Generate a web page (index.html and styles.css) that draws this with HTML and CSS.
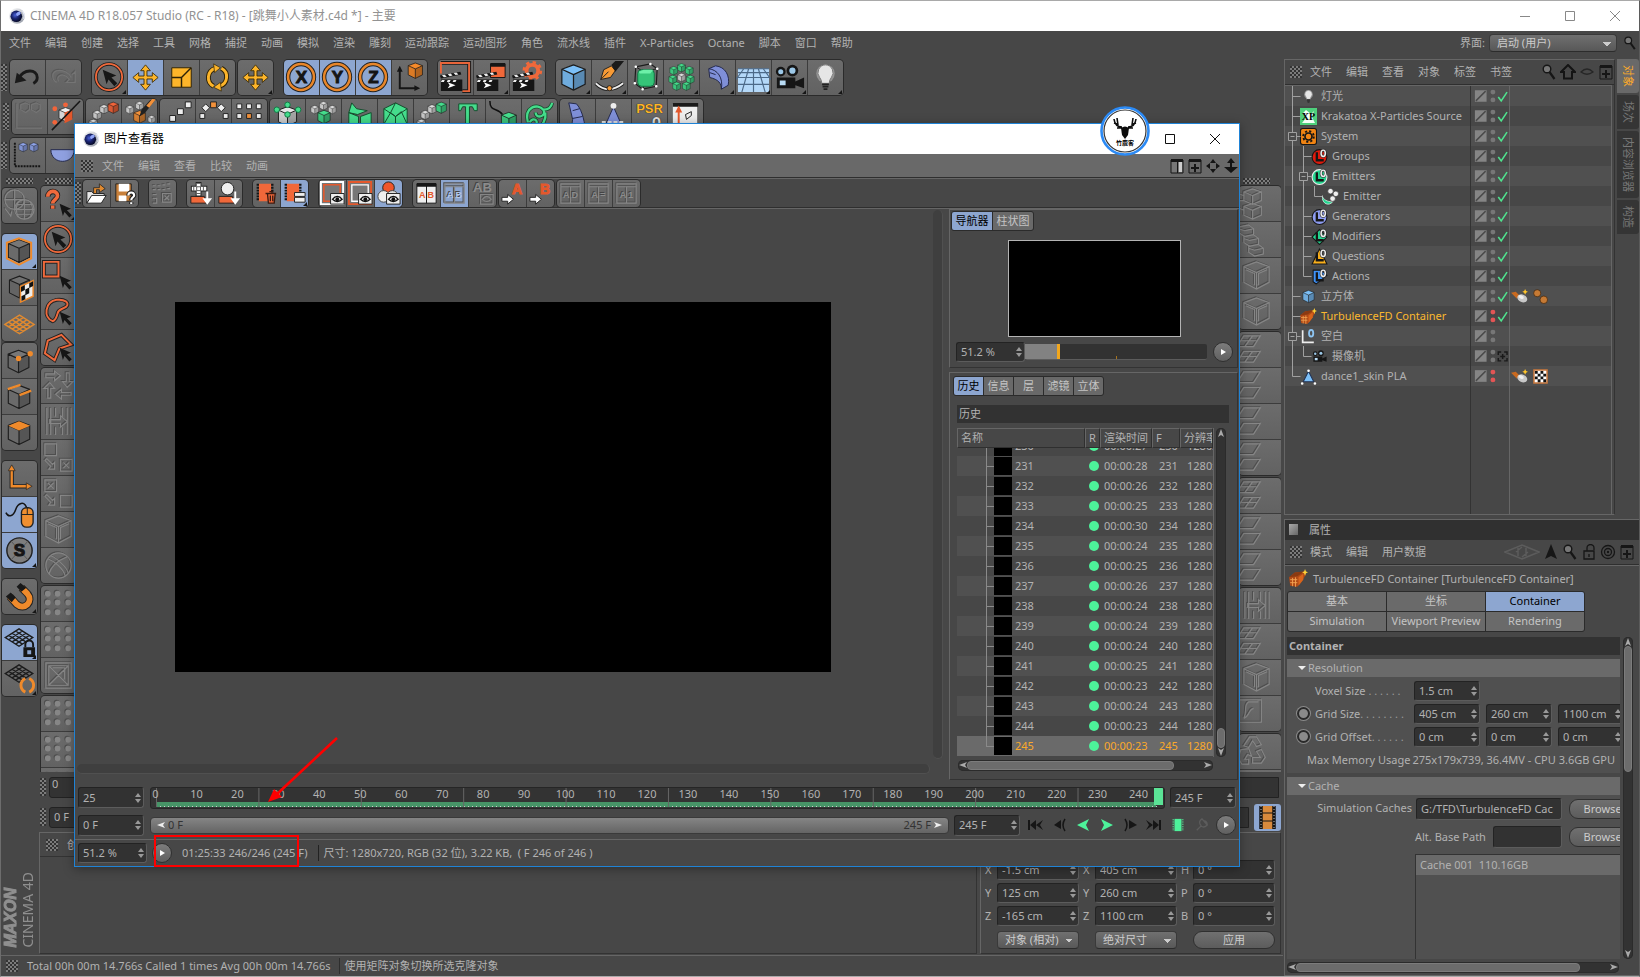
FILE: index.html
```html
<!DOCTYPE html>
<html lang="zh-CN">
<head>
<meta charset="utf-8">
<title>CINEMA 4D R18.057 Studio</title>
<link rel="stylesheet" href="styles.css">
</head>
<body>
<svg class="defs" aria-hidden="true">
<defs>
<radialGradient id="orb" cx="40%" cy="40%" r="60%"><stop offset="0" stop-color="#4a62d8"/><stop offset=".5" stop-color="#1a2470"/><stop offset="1" stop-color="#060a28"/></radialGradient>
<linearGradient id="glass" x1="0" y1="0" x2="1" y2="1"><stop offset="0" stop-color="#fff"/><stop offset="1" stop-color="#8d93a0"/></linearGradient>
</defs>
<symbol id="c4d" viewBox="0 0 16 16"><circle cx="8" cy="8" r="7.800" fill="url(#glass)"/><circle cx="7.300" cy="8.300" r="5.800" fill="url(#orb)"/><path d="M11.500 2.500A6 6 0 0 1 13 12 5 5 0 0 0 11.500 2.500z" fill="#e8ecfa"/><ellipse cx="9.500" cy="6" rx="2.600" ry="1.700" fill="#8fa4f6" transform="rotate(-35 9 6)"/></symbol>
<symbol id="cube" viewBox="0 0 36 36"><path d="M18 5L30 9.500V25L18 31 6 25V9.500z" fill="currentColor"/><path d="M18 15L30 9.500V25L18 31z" fill="#000" opacity=".28"/><path d="M18 15L6 9.500V25L18 31z" fill="#000" opacity=".1"/><path d="M18 5L30 9.500V25L18 31 6 25V9.500zM6 9.500L18 15 30 9.500M18 15V31" fill="none" stroke="#1d1d1d" stroke-width="1.300" stroke-linejoin="round"/></symbol>
<symbol id="undo" viewBox="0 0 36 36"><path d="M9 19C14 9 28 9 28 18c0 3-2 5-4 6" fill="none" stroke="#1a1a1a" stroke-width="3"/><path d="M5 24L7 13l10 8z" fill="#1a1a1a"/></symbol>
<symbol id="redo" viewBox="0 0 36 36"><path d="M26 18C20 8 6 9 7 17c0 3 2 5 4 6M13 22c-3-5 3-9 8-5l3 3-3 3h9V12l-3 3"/></symbol>
<symbol id="ptr" viewBox="0 0 36 36"><path d="M11 10l14 6-5 2 6 6-3 3-6-7-2 5z" fill="#161616"/></symbol>
<symbol id="select" viewBox="0 0 36 36"><circle cx="17.500" cy="17.500" r="13.500" fill="none" stroke="#1d1d1d" stroke-width="3.600"/><circle cx="17.500" cy="17.500" r="13.500" fill="none" stroke="#f06a3c" stroke-width="1.800"/><use href="#ptr" width="36" height="36"/></symbol>
<symbol id="move" viewBox="0 0 36 36"><path d="M18 5l5 6h-3.500v5.500H25V13l6 5-6 5v-3.500h-5.500V25H23l-5 6-5-6h3.500v-5.500H11V23l-6-5 6-5v3.500h5.500V11H13z" fill="#fdb52a" stroke="#3a2a08" stroke-width=".9"/></symbol>
<symbol id="scale" viewBox="0 0 36 36"><path d="M8 8h20v20H8z" fill="#fdb52a" stroke="#2c2208"/><path d="M8 18h10v10M18 18L28 8" fill="none" stroke="#2c2208" stroke-width="1.500"/></symbol>
<symbol id="rotate" viewBox="0 0 36 36"><path d="M14 27A10 10 0 0 1 16 8.500M22 8.500A10 10 0 0 1 20 27" fill="none" stroke="#2c2208" stroke-width="5"/><path d="M14 27A10 10 0 0 1 16 8.500M22 8.500A10 10 0 0 1 20 27" fill="none" stroke="#fdb52a" stroke-width="3"/><path d="M14 4l7 4-6 5zM22 32l-8-4 7-5z" fill="#fdb52a" stroke="#2c2208" stroke-width=".7"/></symbol>
<symbol id="ring" viewBox="0 0 36 36"><circle cx="17.500" cy="17.500" r="13.300" fill="none" stroke="#222" stroke-width="4.600"/><circle cx="17.500" cy="17.500" r="13.300" fill="none" stroke="#e8862a" stroke-width="2.600"/></symbol>
<symbol id="coord" viewBox="0 0 36 36"><path d="M8 9v20h17" fill="none" stroke="#161616" stroke-width="2"/><path d="M8 6l3 6H5zM29 29l-6-3v6z" fill="#161616"/><use href="#cube" x="13" y="0" width="22" height="22" color="#f58a2a"/></symbol>
<symbol id="clap" viewBox="0 0 36 36"><path d="M3 20h22v12H3z" fill="#151515"/><path d="M2 16l21-4 1 3-21 4z" fill="#151515"/><path d="M4 15.800l3-.6 2 2-3 .6zM10 14.600l3-.6 2 2-3 .6zM16 13.400l3-.6 2 2-3 .6zM4 20.500h3l-1 2H3zM10 20.500h3l-1 2H9zM16 20.500h3l-1 2h-3z" fill="#eee"/><path d="M10 23l8 3-8 3 2-3z" fill="#fff"/></symbol>
<symbol id="clap1" viewBox="0 0 36 36"><path d="M3 3h29v29h-7" fill="none" stroke="#1b1b1b" stroke-width="4"/><path d="M3 14V3h29v29h-7" fill="none" stroke="#e8653a" stroke-width="2"/><use href="#clap" width="36" height="36"/></symbol>
<symbol id="clap2" viewBox="0 0 36 36"><path d="M17 4h15v14H17z" fill="#f0683a" stroke="#161616"/><path d="M17 3h15v4H17z" fill="#161616"/><use href="#clap" width="36" height="36"/></symbol>
<symbol id="clap3" viewBox="0 0 36 36"><circle cx="23" cy="11" r="6" fill="none" stroke="#f0683a" stroke-width="4"/><circle cx="23" cy="11" r="8.600" fill="none" stroke="#f0683a" stroke-width="3" stroke-dasharray="3.400 3.350"/><use href="#clap" width="36" height="36"/></symbol>
<symbol id="pen" viewBox="0 0 36 36"><path d="M4 24c8 8 18 8 28 0" fill="none" stroke="#222" stroke-width="4"/><path d="M4 24c8 8 18 8 28 0" fill="none" stroke="#eee" stroke-width="2"/><path d="M9 20l3-10 8-4 4 5-5 7z" fill="#f79a35" stroke="#222"/><path d="M9 20l8-8" stroke="#222"/><path d="M20 5l4-4h9l-9 11z" fill="#1a1a1a"/><circle cx="18" cy="29" r="2.600" fill="#f79a35" stroke="#222"/></symbol>
<symbol id="sds" viewBox="0 0 36 36"><path d="M8 7l15-3 7 5-1 18-14 3-8-6z" fill="none" stroke="#1c1c1c" stroke-width="1.200"/><path d="M8 7l8 5v18M16 12l14-3" fill="none" stroke="#1c1c1c"/><rect x="10" y="10" width="17" height="17" rx="4" fill="#35c478" stroke="#174"/><path d="M11 12l5-2h10l-3 4H12z" fill="#6cf0a8"/><path d="M8 7h.1M23 4h.1M30 9h.1M29 27h.1M15 30h.1M7 24h.1" stroke="#fff" stroke-width="2.600" stroke-linecap="round"/></symbol>
<symbol id="array" viewBox="0 0 36 36"><g color="#45dd8c"><use href="#cube" x="12" y="2" width="12" height="12"/><use href="#cube" x="4" y="5" width="12" height="12"/><use href="#cube" x="20" y="5" width="12" height="12"/><use href="#cube" x="3" y="14" width="12" height="12"/><use href="#cube" x="21" y="14" width="12" height="12"/><use href="#cube" x="7" y="21" width="12" height="12"/><use href="#cube" x="17" y="21" width="12" height="12"/></g><use href="#cube" x="12" y="12" width="12" height="12" color="#ddd"/></symbol>
<symbol id="bend" viewBox="0 0 36 36"><path d="M9 9l7-3c10 1 15 10 13 20l-7 4c0-6-3-10-12-12z" fill="#7f8fd8" stroke="#23284a"/><path d="M9 9c9 1 15 9 13 21M10 13l6 2" fill="none" stroke="#23284a"/></symbol>
<symbol id="floor" viewBox="0 0 36 36"><path d="M2 9h32v24H2z" fill="#b4d8f8"/><path d="M2 9h32M2 13h32M2 18h32M2 25h32M18 9v24M13 9L6 33M23 9l7 24M8 9L0 20M28 9l8 11" stroke="#4d6a88" stroke-width="1.200"/></symbol>
<symbol id="cam" viewBox="0 0 36 36"><circle cx="9" cy="12" r="5" fill="#161616"/><circle cx="21" cy="11" r="6" fill="#161616"/><circle cx="9" cy="12" r="2.600" fill="#9cc8e8"/><circle cx="21" cy="11" r="3.200" fill="#9cc8e8"/><path d="M5 18h19v11H5zM24 22l9-4v11l-9-3z" fill="#161616"/><path d="M8 21h6v5H8z" fill="#b9dcf5"/></symbol>
<symbol id="bulb" viewBox="0 0 36 36"><circle cx="18" cy="14" r="9.500" fill="#fff" opacity=".3"/><path d="M18 5a8 8 0 0 1 6 13c-2 3-2 4-2 6h-8c0-2 0-3-2-6a8 8 0 0 1 6-13z" fill="#e6e6e6" stroke="#777"/><path d="M14.500 25h7M15 27.500h6M16 30h4" stroke="#222" stroke-width="1.800"/></symbol>
<symbol id="chain" viewBox="0 0 36 36"><g color="#ddd"><use href="#cube" x="1" y="19" width="13" height="13"/><use href="#cube" x="5" y="10" width="13" height="13"/><use href="#cube" x="12" y="4" width="13" height="13"/></g><use href="#cube" x="20" y="1" width="16" height="16"/></symbol>
<symbol id="mgx" viewBox="0 0 36 36"><use href="#cube" x="8" y="5" width="20" height="22" color="#eee"/><path d="M17 14l8-3v10l-8 4z" fill="#e4582c"/><g fill="#f2643a"><circle cx="7" cy="10" r="2.500"/><circle cx="18" cy="6" r="2.500"/><circle cx="7" cy="24" r="2.500"/></g><path d="M33 2L4 32" stroke="#161616" stroke-width="1.600"/></symbol>
<symbol id="brush" viewBox="0 0 36 36"><g color="#ddd"><use href="#cube" x="2" y="5" width="12" height="12"/><use href="#cube" x="12" y="1" width="12" height="12"/><use href="#cube" x="25" y="15" width="11" height="12"/></g><use href="#cube" x="9" y="9" width="18" height="19" color="#f2913a"/><path d="M35 0L24 14l-6 4 2-7 9-10z" fill="#222"/><path d="M35 0l-7 9-3-2 6-7z" fill="#f2913a"/></symbol>
<symbol id="lin" viewBox="0 0 36 36"><g fill="#eee" stroke="#222"><path d="M26 3h6v6h-6zM18 10h6v6h-6zM10 17h6v6h-6z"/></g></symbol>
<symbol id="rad" viewBox="0 0 36 36"><g fill="#eee" stroke="#222"><path d="M10 5l4 4-4 4-4-4zM26 5l4 4-4 4-4-4zM4 15h5v5H4zM28 15h5v5h-5z"/><path d="M15 3h6v6h-6z" fill="#f2913a"/></g></symbol>
<symbol id="grd" viewBox="0 0 36 36"><g fill="#eee" stroke="#222"><path d="M5 5h5v5H5zM15 5h5v5h-5zM25 5h5v5h-5zM5 15h5v5H5zM25 15h5v5h-5z"/><path d="M15 15h5v5h-5z" fill="#f2913a"/></g></symbol>
<symbol id="clonew" viewBox="0 0 36 36"><use href="#cube" x="4" y="4" width="28" height="28" color="#e4e4e4"/><g fill="#45dd8c" stroke="#174"><circle cx="7" cy="11" r="2.800"/><circle cx="18" cy="6" r="2.800"/><circle cx="29" cy="11" r="2.800"/><circle cx="18" cy="16" r="2.800"/></g></symbol>
<symbol id="cloner" viewBox="0 0 36 36"><g color="#ddd"><use href="#cube" x="3" y="5" width="12" height="12"/><use href="#cube" x="12" y="1" width="12" height="12"/><use href="#cube" x="21" y="5" width="12" height="12"/></g><use href="#cube" x="9" y="9" width="19" height="19" color="#45dd8c"/></symbol>
<symbol id="frac" viewBox="0 0 36 36"><path d="M7 14l10 4v16L7 30zM19 18l11-4v16l-11 4zM10 4l5 6 11 2-10 4-9-2z" fill="#45dd8c" stroke="#164a2c"/></symbol>
<symbol id="hex" viewBox="0 0 36 36"><path d="M18 4l12 6v16l-12 8-12-8V10z" fill="#45dd8c" stroke="#164a2c"/><path d="M6 10l12 8 12-8M18 18v16M18 4l-5 10 5 4 6-5M6 26l7-12M30 26l-6-13" stroke="#164a2c" fill="none"/></symbol>
<symbol id="tt" viewBox="0 0 36 36"><path d="M9 5h19v7h-3l-2-4h-3v24h-4V8h-3l-2 4H9z" fill="#45dd8c" stroke="#164a2c"/></symbol>
<symbol id="trace" viewBox="0 0 36 36"><path d="M4 2c0 12 8 6 13 14" fill="none" stroke="#111" stroke-width="1.600"/><use href="#cube" x="12" y="10" width="23" height="24" color="#45dd8c"/></symbol>
<symbol id="vine" viewBox="0 0 36 36"><path d="M6 24C2 8 16 4 22 11c4 7-8 10-8 3M22 11c4 0 8-2 9-7M24 14c1 6-2 14-10 18M8 24c3-6 10-2 6 3" fill="none" stroke="#164a2c" stroke-width="4"/><path d="M6 24C2 8 16 4 22 11c4 7-8 10-8 3M22 11c4 0 8-2 9-7M24 14c1 6-2 14-10 18M8 24c3-6 10-2 6 3" fill="none" stroke="#45dd8c" stroke-width="2.400"/></symbol>
<symbol id="horn" viewBox="0 0 36 36"><path d="M9 4l8 1c7 8 8 20 10 30H11l2-14z" fill="#7f8fd8" stroke="#23284a"/><path d="M13 12l7-2M13 20l10-2" stroke="#23284a"/></symbol>
<symbol id="figure" viewBox="0 0 36 36"><path d="M18 8l8 18H10z" fill="#7f8fd8" stroke="#23284a"/><circle cx="18" cy="7" r="3" fill="#eee"/><path d="M6 24h24" stroke="#ddd" stroke-width="3" stroke-dasharray="4 2"/></symbol>
<symbol id="sheet" viewBox="0 0 36 36"><path d="M5 5h25v30H5z" fill="#eee"/><path d="M5 4h26v4H5z" fill="#1a1a1a"/><path d="M11 10v24M9 13l2-4 2 4z" stroke="#e4582c" stroke-width="2"/><path d="M18 16l6-3v4l-5 4z" fill="none" stroke="#222"/></symbol>
<symbol id="plot" viewBox="0 0 36 36"><path d="M5 5v24h26" fill="none" stroke="#151515" stroke-width="2" stroke-dasharray="2 1"/><g color="#8fa4ea"><use href="#cube" x="7" y="3" width="13" height="13"/><use href="#cube" x="18" y="3" width="13" height="13"/></g></symbol>
<symbol id="g-plot" viewBox="0 0 36 36"><path d="M5 5v25h26M9 6l5-2 4 2v5l-4 3-5-3zM20 6l5-2 4 2v5l-4 3-5-3z"/></symbol>
<symbol id="cup" viewBox="0 0 36 36"><path d="M5 12h24c0 8-6 12-12 12S5 20 5 12z" fill="#8fa0e0" stroke="#23284a"/></symbol>
<!-- mode palette -->
<symbol id="m-model" viewBox="0 0 36 36"><use href="#cube" x="1" y="1" width="33" height="33" color="#777"/><path d="M17.500 4.500L30 9v16l-12.500 6.500L5 25V9z" fill="none" stroke="#ef8a2b" stroke-width="2"/></symbol>
<symbol id="m-tex" viewBox="0 0 36 36"><use href="#cube" x="2" y="2" width="32" height="31" color="#707070"/><path d="M19 17l13-6v16l-13 6z" fill="#eee" stroke="#ef8a2b" stroke-width="1.500"/><path d="M19.500 17.500l4-2v5l-4 2zM28 13.500l4-2v5l-4 2zM24 20l4-2v6l-4 2zM20 27l4-2v5l-4 2z" fill="#111"/></symbol>
<symbol id="m-grid" viewBox="0 0 36 36"><path d="M3 19L18 9.500 33 19 18 28.500zM6.750 16.625l15 9.500M10.500 14.250l15 9.500M14.250 11.875l15 9.500M29.250 16.625l-15 9.500M25.500 14.250l-15 9.500M21.750 11.875l-15 9.500" fill="none" stroke="currentColor" stroke-width="1.500"/></symbol>
<symbol id="m-pts" viewBox="0 0 36 36"><use href="#cube" x="1" y="3" width="32" height="32" color="#777"/><circle cx="17" cy="16" r="2.800" fill="#ef8a2b"/><circle cx="29" cy="11" r="2.800" fill="#ef8a2b"/></symbol>
<symbol id="m-edge" viewBox="0 0 36 36"><use href="#cube" x="1" y="2" width="33" height="33" color="#777"/><path d="M6 10.500l13-4.500M18 16.500l12-4.500" stroke="#ef8a2b" stroke-width="2.400"/></symbol>
<symbol id="m-poly" viewBox="0 0 36 36"><use href="#cube" x="1" y="2" width="33" height="33" color="#777"/><path d="M17.500 6.500L29 11l-11.500 5L6.500 11z" fill="#ef8a2b"/></symbol>
<symbol id="m-axis" viewBox="0 0 36 36"><path d="M10 9v17h17" fill="none" stroke="#222" stroke-width="4.400"/><path d="M10 9v17h17" fill="none" stroke="#ef8a2b" stroke-width="2.400"/><path d="M10 4l3.500 6h-7zM31 26l-6-3.500v7z" fill="#ef8a2b" stroke="#222" stroke-width=".7"/></symbol>
<symbol id="m-mouse" viewBox="0 0 36 36"><path d="M4 16c3 6 8 3 10-3s9-11 12 0" fill="none" stroke="#161616" stroke-width="1.600"/><rect x="20" y="11" width="12" height="20" rx="5" fill="#f08f30" stroke="#222" stroke-width="1.400"/><path d="M20 18h12M26 11v7" stroke="#222"/></symbol>
<symbol id="m-s" viewBox="0 0 36 36"><circle cx="18" cy="18" r="13" fill="#7d7d7d" stroke="#222" stroke-width="1.500"/><path d="M9 8l18 20M27 8L9 28" stroke="#555"/></symbol>
<symbol id="m-mag" viewBox="0 0 36 36"><path d="M8 18l7 8c8 7 18-3 11-11l-6-6" fill="none" stroke="#222" stroke-width="8"/><path d="M8 18l7 8c8 7 18-3 11-11l-6-6" fill="none" stroke="#ef8a2b" stroke-width="6"/><path d="M4 18l5-4 5 5-4 5zM15 8l4-4 6 5-5 4z" fill="#181818"/></symbol>
<symbol id="m-lock" viewBox="0 0 36 36"><use href="#m-grid" x="0" y="-5" width="35" height="34" color="#1c1c1c"/><path d="M24 23v-3a4 4 0 0 1 8 0v3" fill="none" stroke="#161616" stroke-width="2"/><path d="M22 23h12v10H22z" fill="#161616"/><path d="M26 26h4v4h-4z" fill="#8da6d0"/></symbol>
<symbol id="m-loop" viewBox="0 0 36 36"><use href="#m-grid" x="0" y="-5" width="35" height="34" color="#1c1c1c"/><path d="M24 18c-6 3-6 11 0 14M28 18c6 3 6 11 0 14" fill="none" stroke="#ef8a2b" stroke-width="3"/></symbol>
<symbol id="s-q" viewBox="0 0 36 36"><path d="M7 11c0-7 10-7 10-1 0 4-5 4-5 8M12 20v3.500" fill="none" stroke="#222" stroke-width="5.500"/><path d="M7 11c0-7 10-7 10-1 0 4-5 4-5 8M12 20v3.500" fill="none" stroke="#f06a3c" stroke-width="3.800"/><use href="#ptr" x="10" y="10" width="30" height="30"/></symbol>
<symbol id="s-rect" viewBox="0 0 36 36"><path d="M3 4h15v15H3z" fill="none" stroke="#222" stroke-width="4"/><path d="M3 4h15v15H3z" fill="none" stroke="#f06a3c" stroke-width="2"/><use href="#ptr" x="10" y="10" width="30" height="30"/></symbol>
<symbol id="s-free" viewBox="0 0 36 36"><path d="M12 28C2 24 4 8 16 6c8-1 14 3 10 7-4 3-8 2-9 7-1 4-2 7-5 8z" fill="none" stroke="#222" stroke-width="4"/><path d="M12 28C2 24 4 8 16 6c8-1 14 3 10 7-4 3-8 2-9 7-1 4-2 7-5 8z" fill="none" stroke="#f06a3c" stroke-width="2"/><use href="#ptr" x="10" y="10" width="30" height="30"/></symbol>
<symbol id="s-poly" viewBox="0 0 36 36"><path d="M7 11l14-6 10 10-12 4-5 12L4 24z" fill="none" stroke="#222" stroke-width="4"/><path d="M7 11l14-6 10 10-12 4-5 12L4 24z" fill="none" stroke="#f06a3c" stroke-width="2"/><use href="#ptr" x="10" y="10" width="30" height="30"/></symbol>
<!-- embossed, unavailable tools -->
<symbol id="g-globe" viewBox="0 0 36 36"><circle cx="13" cy="12" r="10"/><circle cx="23" cy="22" r="10"/><path d="M13 2v20M3 12h20M23 12v20M13 22h20M17 14c-3 5-3 11 0 16M29 14c3 5 3 11 0 16M15 17h16M15 27h16M3 21l6 8 1-5"/></symbol>
<symbol id="g-swap" viewBox="0 0 36 36"><path d="M5 6h9V3l6 5-6 5v-3H5zM29 5v9h4l-6 6-5-6h4V5zM31 28H21v4l-6-5 6-5v3h10zM7 31V21H3l6-6 5 6h-4v10z"/></symbol>
<symbol id="g-spread" viewBox="0 0 36 36"><path d="M6 4v28M10 4v28M15 4v9M15 24v8M22 4v9M22 24v8M27 4v28M31 4v28M9 16h11v-4l7 6-7 6v-4H9z"/></symbol>
<symbol id="g-box1" viewBox="0 0 36 36"><path d="M4 4h12v12H4zM20 20h12v12H20zM23 23l6 6M29 23l-6 6M4 21l6 6-2 3h6v-7l-2 2-6-6z"/></symbol>
<symbol id="g-box2" viewBox="0 0 36 36"><path d="M4 4h12v12H4zM20 20h12v12H20zM7 7l6 6M13 7l-6 6M4 21l6 6-2 3h6v-7l-2 2-6-6z"/></symbol>
<symbol id="g-cube" viewBox="0 0 36 36"><path d="M18 4l13 5v16l-13 7-13-7V9zM5 9l13 6 13-6M18 15v17M7 12l9 4v12M29 12l-9 4v12"/></symbol>
<symbol id="g-ball" viewBox="0 0 36 36"><circle cx="18" cy="18" r="13"/><path d="M7 11c6 2 16 10 18 18M10 8c6 2 17 12 18 18M27 9C17 13 10 20 8 27"/></symbol>
<symbol id="g-dots" viewBox="0 0 36 36"><g stroke-width="3"><circle cx="7" cy="8" r="1.500"/><circle cx="17" cy="8" r="1.500"/><circle cx="28" cy="8" r="1.500"/><circle cx="7" cy="17" r="1.500"/><circle cx="17" cy="17" r="1.500"/><circle cx="28" cy="17" r="1.500"/><circle cx="7" cy="27" r="1.500"/><circle cx="17" cy="27" r="1.500"/><circle cx="28" cy="27" r="1.500"/></g></symbol>
<symbol id="g-frame" viewBox="0 0 36 36"><path d="M5 5h26v26H5zM8 8h20v20H8zM8 8l20 20M28 8L8 28M12 10h12v12"/></symbol>
<symbol id="g-plane" viewBox="0 0 36 36"><path d="M5 4h17l-7 11H-2zM5 20h17l-7 11H-2z"/></symbol>
<symbol id="g-plane2" viewBox="0 0 36 36"><path d="M5 4h17l-7 11H-2zM5 20h17l-7 11H-2zM14 4l-8 11M1 9h17M14 20l-8 11M1 25h17"/></symbol>
<symbol id="g-cubes" viewBox="0 0 36 36"><path d="M14 3l9 3v9l-9 4-9-4V6zM5 6l9 4 9-4M14 10v9M14 18l9 3v9l-9 4-9-4v-9zM5 21l9 4 9-4M14 25v9M-4 6l9 4M-4 21l9 4M-4 15l9 0"/></symbol>
<symbol id="g-stairs" viewBox="0 0 36 36"><path d="M0 5l10-2 5 4v6l-9 2-6-4zM5 15l10-2 5 4v6l-9 2-6-4zM10 25l10-2 5 4v6l-9 2-6-4zM0 7l6 2 9-2M5 17l6 2 9-2M10 27l6 2 9-2"/></symbol>
<symbol id="g-leaf" viewBox="0 0 36 36"><path d="M0 4h23v23H0zM20 6H10c-6 4-1 9-5 17M5 23c6-2 5-10 10-10"/></symbol>
<symbol id="g-cycle" viewBox="0 0 36 36"><path d="M5 12l6-9h7l5 8-5 2-4-6-4 7zM23 16l4 8-4 6h-9v-6h8l-4-6zM2 16l8-1 3 8-4-2-3 5h4v5H3l-4-6z"/></symbol>
<!-- viewer toolbar -->
<symbol id="v-open" viewBox="0 0 28 28"><path d="M4 24V12h5l2 2h11v3H9z" fill="#e8e8e8" stroke="#222"/><path d="M4 24l5-8h15l-5 8z" fill="#fff" stroke="#222"/><path d="M11 14V8h6V4l6 5-6 4v-3h-3v4z" fill="#e08a30" stroke="#222" stroke-width=".8"/></symbol>
<symbol id="v-save" viewBox="0 0 28 28"><path d="M5 4h16v18H5z" fill="#c8803a" stroke="#222"/><path d="M8 4h11v8H8zM8 16h8v6H8z" fill="#fff"/><path d="M18 16c0-4 6-4 6 0 0 2-3 2-3 5M21 23v2" fill="none" stroke="#222" stroke-width="4.500"/><path d="M18 16c0-4 6-4 6 0 0 2-3 2-3 5M21 23v2" fill="none" stroke="#fff" stroke-width="2.200"/></symbol>
<symbol id="v-stop" viewBox="0 0 28 28"><path d="M4 6h3M9 6h3M14 5h3M19 4h3M4 10h3M9 10h3M14 10h3M19 9h3M4 15h4M4 19h4v5H4M14 14h9v9h-9zM16 16l5 5M21 16l-5 5"/></symbol>
<symbol id="v-add" viewBox="0 0 28 28"><path d="M4 17h14l2 7H4z" fill="#f0683a" stroke="#222"/><path d="M12 2v15M4 9h17" stroke="#222" stroke-width="6"/><path d="M12 3v13M5 9h15" stroke="#fff" stroke-width="4"/><path d="M10 7h4v4h-4zM10 3.500h4M7 7v4M17 7v4M10 14h4" fill="none" stroke="#333" stroke-width=".8"/><path d="M21 12v9M18 20l3 4 3-4z" stroke="#fff" fill="#fff" stroke-width="2"/></symbol>
<symbol id="v-ball" viewBox="0 0 28 28"><path d="M4 17h14l2 7H4z" fill="#f0683a" stroke="#222"/><circle cx="13" cy="9" r="6.500" fill="#eee" stroke="#222"/><path d="M21 12v9M18 20l3 4 3-4z" stroke="#fff" fill="#fff" stroke-width="2"/></symbol>
<symbol id="v-film" viewBox="0 0 28 28"><path d="M6 4h13v18H6z" fill="#f0683a"/><path d="M5 4v18M20 4v18" stroke="#161616" stroke-width="2.500" stroke-dasharray="2 1"/></symbol>
<symbol id="v-del" viewBox="0 0 28 28"><use href="#v-film" width="28" height="28"/><path d="M13 14h11M15 14l1 10h6l1-10M17 12h4M18 16v6M20.500 16v6" fill="#f0683a" stroke="#3a1a10" stroke-width="1.400"/></symbol>
<symbol id="v-sets" viewBox="0 0 28 28"><use href="#v-film" width="28" height="28"/><path d="M14 13h11v4H14zM14 18h11v5H14z" fill="#eee" stroke="#222"/></symbol>
<symbol id="eye" viewBox="0 0 28 28"><path d="M12 14h14v11H12z" fill="#eee" stroke="#222"/><path d="M14 20c3-4 7-4 10 0-3 3-7 3-10 0z" fill="#fff" stroke="#111" stroke-width="1.400"/><circle cx="19" cy="20" r="2" fill="#111"/></symbol>
<symbol id="v-f1" viewBox="0 0 28 28"><path d="M2 2h23v23H2z" fill="#777" stroke="#fff" stroke-width="2"/><path d="M5 5h17v17H5z" fill="none" stroke="#e4582c" stroke-width="1.600"/><use href="#eye" width="28" height="28"/></symbol>
<symbol id="v-f2" viewBox="0 0 28 28"><path d="M2 2h23v23H2z" fill="#777" stroke="#e4582c" stroke-width="2"/><path d="M5 5h17v17H5z" fill="none" stroke="#fff" stroke-width="1.400"/><use href="#eye" width="28" height="28"/></symbol>
<symbol id="v-rgb" viewBox="0 0 28 28"><circle cx="14" cy="8" r="6" fill="#f0562c" stroke="#222"/><circle cx="9" cy="17" r="6" fill="#eee" stroke="#444"/><circle cx="18" cy="17" r="6" fill="#ddd" stroke="#444"/><use href="#eye" width="28" height="28"/></symbol>
<symbol id="v-page" viewBox="0 0 28 28"><path d="M4 4h20v20H4z" fill="#eee" stroke="#161616"/><path d="M4 3h20v4H4zM13.500 7h1v17h-1z" fill="#161616"/></symbol>
<symbol id="v-pg" viewBox="0 0 28 28"><path d="M4 4h20v20H4zM4 7h20M14 7v17"/></symbol>
<symbol id="v-arr" viewBox="0 0 28 28"><path d="M3 18h6v-3l6 5-6 5v-3H3z" fill="#fff" stroke="#222"/></symbol>
<!-- small glyphs -->
<symbol id="spin" viewBox="0 0 6 12"><path d="M3 1l3 4H0zM3 11L0 7h6z" fill="#999"/></symbol>
<symbol id="mag" viewBox="0 0 16 16"><circle cx="6" cy="5" r="3.800" fill="#777" stroke="#161616" stroke-width="1.400"/><path d="M8.500 8l5 7" stroke="#161616" stroke-width="2.200"/></symbol>
<symbol id="home" viewBox="0 0 16 16"><path d="M8 1l7 7h-3v6.500H4V8H1z" fill="none" stroke="#141414" stroke-width="2"/></symbol>
<symbol id="eyes" viewBox="0 0 16 16"><path d="M2 8c4-4 8-4 12 0-4 3-8 3-12 0z" fill="none" stroke="#262626" stroke-width="1.300"/></symbol>
<symbol id="plus" viewBox="0 0 16 16"><path d="M2 2h12v13H2z" fill="none" stroke="#161616"/><path d="M2 1h12v3H2zM7 6h2v8H7zM4 9h8v2H4z" fill="#161616"/></symbol>
<symbol id="dock" viewBox="0 0 16 16"><path d="M2 2h12v13H2z" fill="#777" stroke="#161616"/><path d="M2 1h12v3H2zM8 4h1v11H8z" fill="#161616"/><path d="M10 4h3v10h-3z" fill="#ccc"/></symbol>
<symbol id="pan" viewBox="0 0 16 16"><path d="M8 1l3 4H5zM8 15l3-4H5zM1 8l4-3v6zM15 8l-4-3v6z" fill="#141414"/></symbol>
<symbol id="updn" viewBox="0 0 16 16"><path d="M8 0l4 5H9v4h6l-7 6-7-6h6V5H4z" fill="#141414"/></symbol>
<symbol id="lock" viewBox="0 0 16 16"><path d="M6 7V4a3.500 3.500 0 0 1 7 0v2M3 7h10v8H3zM8 10v3" fill="none" stroke="#161616" stroke-width="1.300"/></symbol>
<symbol id="target" viewBox="0 0 16 16"><circle cx="8" cy="8" r="6.500" fill="none" stroke="#161616" stroke-width="1.300"/><circle cx="8" cy="8" r="3.500" fill="none" stroke="#161616" stroke-width="1.300"/><circle cx="8" cy="8" r="1.200" fill="#161616"/></symbol>
<symbol id="play" viewBox="0 0 8 8"><path d="M2 1l5 3-5 3z" fill="#fff"/></symbol>
<symbol id="flags" viewBox="0 0 39 20"><path d="M4 4h12v12H4z" fill="#858585"/><path d="M5 15L15 5" stroke="#4a4a4a" stroke-width="1.500"/><circle cx="22.500" cy="6" r="2.500" fill="currentColor"/><circle cx="22.500" cy="14" r="2.500" fill="currentColor"/></symbol>
<symbol id="tick" viewBox="0 0 39 20"><use href="#flags" width="39" height="20"/><path d="M28 11l3 4 6-9" fill="none" stroke="#4fe38e" stroke-width="1.600"/></symbol>
<symbol id="l0" viewBox="0 0 16 16"><path d="M5.500 4v7.500H12" fill="none" stroke="#161616" stroke-width="2.200"/><ellipse cx="11.500" cy="5" rx="2" ry="3" fill="none" stroke="#333" stroke-width="2.600"/><ellipse cx="11.500" cy="5" rx="2" ry="3" fill="none" stroke="#eee" stroke-width="1.400"/></symbol>
<symbol id="o-xp" viewBox="0 0 17 17"><path d="M0 0h17v17H0z" fill="#4fd07c"/><path d="M3 5l3-3 5 4 3-3-2 6 3 6H2l4-5z" fill="#f4fff8"/></symbol>
<symbol id="o-sys" viewBox="0 0 16 16"><rect x=".5" y=".5" width="15" height="15" rx="2" fill="#f08413" stroke="#151515"/><circle cx="8" cy="8" r="3.300" fill="none" stroke="#151515" stroke-width="1.600"/><circle cx="8" cy="8" r="5" fill="none" stroke="#151515" stroke-width="1.800" stroke-dasharray="2 1.930"/></symbol>
<symbol id="o-grp" viewBox="0 0 16 16"><circle cx="8" cy="8.500" r="7" fill="#e01a0c" stroke="#161616"/><use href="#l0" width="16" height="16"/></symbol>
<symbol id="o-emi" viewBox="0 0 16 16"><circle cx="8" cy="8.500" r="7" fill="#24d690" stroke="#eee"/><use href="#l0" width="16" height="16"/></symbol>
<symbol id="o-gen" viewBox="0 0 16 16"><circle cx="8" cy="8.500" r="7" fill="#8d9cf2" stroke="#161616"/><use href="#l0" width="16" height="16"/></symbol>
<symbol id="o-mod" viewBox="0 0 16 16"><path d="M8 1.500l7 7-7 7-7-7z" fill="#24d690" stroke="#161616"/><use href="#l0" width="16" height="16"/></symbol>
<symbol id="o-que" viewBox="0 0 16 16"><path d="M8 1l7 14H1z" fill="#fbb01c" stroke="#161616"/><use href="#l0" width="16" height="16"/></symbol>
<symbol id="o-act" viewBox="0 0 16 16"><path d="M2 2h8l5 5-10 8-3-2z" fill="#3f93fa" stroke="#161616" stroke-linejoin="round"/><use href="#l0" width="16" height="16"/></symbol>
<symbol id="o-em1" viewBox="0 0 16 16"><path d="M0 7c1 4 5 6 10 6-3 4-10 3-10-6z" fill="#24d690" stroke="#fff" stroke-width=".6"/><g fill="#f0f0f0" stroke="#333" stroke-width=".6"><circle cx="8" cy="3" r="2.600"/><circle cx="13" cy="5.500" r="2.600"/><circle cx="10" cy="10" r="2.600"/></g></symbol>
<symbol id="o-tfd" viewBox="0 0 16 16"><path d="M0 7l5-4 8-1 1 3-3 5-4 5-6-1z" fill="#b04a16"/><path d="M0 7l7-1 6-4-8 1z" fill="#8a3a12"/><path d="M1 9h6M1 11.500h6M3 7.500v7M5.500 7v8" stroke="#f2a050" stroke-width=".8"/><path d="M8 7l4-3v5l-4 5z" fill="#d8641c"/><path d="M13.500 0l.8 2 1.700.8-1.700.8-.8 2-.8-2-1.700-.8 1.700-.8z" fill="#ffd23a"/></symbol>
<symbol id="o-null" viewBox="0 0 16 16"><path d="M2.500 2v11.500H13" fill="none" stroke="#eee" stroke-width="1.600"/><ellipse cx="10.500" cy="5" rx="2" ry="3.200" fill="none" stroke="#8ec6f4" stroke-width="1.700"/></symbol>
<symbol id="o-pla" viewBox="0 0 16 16"><path d="M8 3l5 10H3z" fill="#7cc0f8" stroke="#235"/><path d="M8 2.500h.1M2 14.500h.1M14 14.500h.1" stroke="#fff" stroke-width="2.400" stroke-linecap="round"/></symbol>
<symbol id="t-tfd" viewBox="0 0 18 16"><path d="M0 4l5-1 4 4-3 3z" fill="#c96a20"/><ellipse cx="12" cy="10" rx="5.500" ry="4" fill="#c8c8c8" transform="rotate(25 12 10)"/><ellipse cx="11" cy="8.500" rx="3" ry="1.800" fill="#eee" transform="rotate(25 11 8)"/><path d="M15 0l1 2 2 1-2 1-1 2-1-2-2-1 2-1z" fill="#ffc52a"/></symbol>
<symbol id="t-dyn" viewBox="0 0 16 16"><circle cx="4.500" cy="4.500" r="3.800" fill="#c57a35" stroke="#3a2008" stroke-width=".7"/><circle cx="11.500" cy="11.500" r="4" fill="#c57a35" stroke="#3a2008" stroke-width=".7"/></symbol>
<symbol id="t-uv" viewBox="0 0 16 16"><path d="M1 1h14v14H1z" fill="#fff" stroke="#c8763a" stroke-width="1.600"/><path d="M2 2h3v3H2zM8 2h3v3H8zM5 5h3v3H5zM11 5h3v3h-3zM2 8h3v3H2zM8 8h3v3H8zM5 11h3v3H5zM11 11h3v3h-3z" fill="#111"/></symbol>
</svg>

<div class="app">
<header class="titlebar">
  <svg class="logo"><use href="#c4d"/></svg><h1>CINEMA 4D R18.057 Studio (RC - R18) - [跳舞小人素材.c4d *] - 主要</h1>
  <div class="winbtns"><button aria-label="最小化"><svg viewBox="0 0 12 12"><path d="M1 6.500h10"/></svg></button><button aria-label="最大化"><svg viewBox="0 0 12 12"><path d="M1.500 1.500h9v9h-9z"/></svg></button><button aria-label="关闭"><svg viewBox="0 0 12 12"><path d="M1 1l10 10M11 1L1 11"/></svg></button></div>
</header>
<nav class="menubar">
  <span>文件</span><span>编辑</span><span>创建</span><span>选择</span><span>工具</span><span>网格</span><span>捕捉</span><span>动画</span><span>模拟</span><span>渲染</span><span>雕刻</span><span>运动跟踪</span><span>运动图形</span><span>角色</span><span>流水线</span><span>插件</span><span>X-Particles</span><span>Octane</span><span>脚本</span><span>窗口</span><span>帮助</span>
  <label class="layout">界面: <select><option>启动 (用户)</option></select></label><svg class="g16"><use href="#mag"/></svg>
</nav>

<div class="columns">
<main class="left">
  <div class="tools">
    <div class="trow"><i class="grip v"></i>
      <div class="grp"><button><svg><use href="#undo"/></svg></button><button class="gh faint"><svg><use href="#redo"/></svg></button></div>
      <div class="grp"><button class="more"><svg><use href="#select"/></svg></button><button class="on"><svg><use href="#move"/></svg></button><button><svg><use href="#scale"/></svg></button><button><svg><use href="#rotate"/></svg></button></div>
      <div class="grp near"><button class="more"><svg><use href="#move"/></svg></button></div>
      <div class="grp"><button class="on axis"><svg><use href="#ring"/></svg><b>X</b></button><button class="on axis"><svg><use href="#ring"/></svg><b>Y</b></button><button class="on axis"><svg><use href="#ring"/></svg><b>Z</b></button><button><svg><use href="#coord"/></svg></button></div>
      <div class="grp"><button><svg><use href="#clap1"/></svg></button><button class="more"><svg><use href="#clap2"/></svg></button><button><svg><use href="#clap3"/></svg></button></div>
      <div class="grp"><button class="more"><svg color="#7cc0f8"><use href="#cube"/></svg></button><button class="more"><svg><use href="#pen"/></svg></button><button class="more"><svg><use href="#sds"/></svg></button><button class="more"><svg><use href="#array"/></svg></button><button class="more"><svg><use href="#bend"/></svg></button><button class="more"><svg><use href="#floor"/></svg></button><button class="more"><svg><use href="#cam"/></svg></button><button class="more"><svg><use href="#bulb"/></svg></button></div>
    </div>
    <div class="trow second"><i class="grip v"></i>
      <div class="grp"><button class="gh faint"><svg><use href="#g-plot"/></svg></button><button><svg><use href="#mgx"/></svg></button></div>
      <div class="grp"><button><svg color="#f2643a"><use href="#chain"/></svg></button><button><svg><use href="#brush"/></svg></button></div>
      <div class="grp"><button><svg><use href="#lin"/></svg></button><button><svg><use href="#rad"/></svg></button><button><svg><use href="#grd"/></svg></button></div>
      <div class="grp"><button><svg><use href="#clonew"/></svg></button><button><svg><use href="#cloner"/></svg></button><button><svg><use href="#frac"/></svg></button><button><svg><use href="#hex"/></svg></button><button><svg color="#45dd8c"><use href="#chain"/></svg></button><button><svg><use href="#tt"/></svg></button><button><svg><use href="#trace"/></svg></button><button><svg><use href="#vine"/></svg></button></div>
      <div class="grp"><button><svg><use href="#horn"/></svg></button><button><svg><use href="#figure"/></svg></button><button class="psr"><b>PSR</b><b>0</b></button><button><svg><use href="#sheet"/></svg></button></div>
    </div>
    <div class="trow"><i class="grip v"></i><div class="grp"><button><svg><use href="#plot"/></svg></button><button><svg><use href="#cup"/></svg></button></div></div>
  </div>
  <div class="work">
    <aside class="modes">
      <i class="grip h"></i>
      <div class="grp col"><button class="gh"><svg><use href="#g-globe"/></svg></button></div>
      <div class="grp col far"><button class="on more"><svg><use href="#m-model"/></svg></button><button><svg><use href="#m-tex"/></svg></button><button><svg color="#e08a30"><use href="#m-grid"/></svg></button></div>
      <div class="grp col"><button><svg><use href="#m-pts"/></svg></button><button><svg><use href="#m-edge"/></svg></button><button><svg><use href="#m-poly"/></svg></button></div>
      <div class="grp col far"><button><svg><use href="#m-axis"/></svg></button><button class="on"><svg><use href="#m-mouse"/></svg></button><button class="on axis more"><svg><use href="#m-s"/></svg><b>S</b></button></div>
      <div class="grp col far"><button class="more"><svg><use href="#m-mag"/></svg></button></div>
      <div class="grp col far"><button class="on more"><svg><use href="#m-lock"/></svg></button><button class="more"><svg><use href="#m-loop"/></svg></button></div>
      <div class="brand"><b>MAXON</b><span>CINEMA 4D</span></div>
    </aside>
    <div class="center">
      <div class="stage">
        <div class="toolcol">
          <i class="grip h"></i>
          <div class="grp col"><button class="more"><svg><use href="#s-q"/></svg></button><button><svg><use href="#select"/></svg></button><button><svg><use href="#s-rect"/></svg></button><button><svg><use href="#s-free"/></svg></button><button><svg><use href="#s-poly"/></svg></button></div>
          <div class="grp col gh"><button><svg><use href="#g-swap"/></svg></button><button><svg><use href="#g-spread"/></svg></button><button><svg><use href="#g-box1"/></svg></button><button><svg><use href="#g-box2"/></svg></button><button><svg><use href="#g-cube"/></svg></button><button><svg><use href="#g-ball"/></svg></button></div>
          <div class="grp col gh"><button><svg><use href="#g-dots"/></svg></button><button><svg><use href="#g-dots"/></svg></button><button><svg><use href="#g-frame"/></svg></button></div>
          <div class="grp col gh"><button><svg><use href="#g-dots"/></svg></button><button><svg><use href="#g-dots"/></svg></button><button><svg><use href="#g-dots"/></svg></button></div>
        </div>
        <div class="viewport"></div>
        <div class="toolcol wide">
          <i class="grip h"></i>
          <div class="grp col gh"><button><svg><use href="#g-cubes"/></svg></button><button><svg><use href="#g-stairs"/></svg></button><button><svg><use href="#g-cube"/></svg></button><button><svg><use href="#g-cube"/></svg></button></div>
          <div class="grp col gh"><button><svg><use href="#g-plane2"/></svg></button><button><svg><use href="#g-plane"/></svg></button><button><svg><use href="#g-plane"/></svg></button><button><svg><use href="#g-plane"/></svg></button></div>
          <div class="grp col gh"><button><svg><use href="#g-plane2"/></svg></button><button><svg><use href="#g-plane"/></svg></button><button><svg><use href="#g-plane"/></svg></button></div>
          <div class="grp col gh"><button><svg><use href="#g-spread"/></svg></button><button><svg><use href="#g-plane2"/></svg></button><button><svg><use href="#g-cube"/></svg></button><button><svg><use href="#g-leaf"/></svg></button></div>
          <div class="grp col gh"><button><svg><use href="#g-cycle"/></svg></button><button><svg><use href="#g-plane"/></svg></button></div>
        </div>
      </div>
      <div class="tl one"><i class="grip v"></i><div class="tlbar">0</div></div>
      <div class="tl two"><i class="grip v"></i><div class="tlbar">0 F</div><button class="film" aria-label="动画"><svg viewBox="0 0 27 27"><path d="M7 2h13v23H7z" fill="#d98a3c"/><path d="M7 2v23M20 2v23" stroke="#161616" stroke-width="3.500"/><path d="M7 9h13M7 17h13" stroke="#161616"/><path d="M7 2v23M20 2v23" stroke="#bbb" stroke-width="1" stroke-dasharray="1 2"/></svg></button></div>
      <div class="bottom">
        <section class="mats"><header><i class="grip b"></i>创建</header></section>
        <section class="coords">
          <div class="cgrid">
            <label for="px">X</label><span class="num"><input id="px" value="-1.5 cm"><svg><use href="#spin"/></svg></span><label for="sx">X</label><span class="num"><input id="sx" value="405 cm"><svg><use href="#spin"/></svg></span><label for="rh">H</label><span class="num"><input id="rh" value="0 °"><svg><use href="#spin"/></svg></span>
            <label for="py">Y</label><span class="num"><input id="py" value="125 cm"><svg><use href="#spin"/></svg></span><label for="sy">Y</label><span class="num"><input id="sy" value="260 cm"><svg><use href="#spin"/></svg></span><label for="rp">P</label><span class="num"><input id="rp" value="0 °"><svg><use href="#spin"/></svg></span>
            <label for="pz">Z</label><span class="num"><input id="pz" value="-165 cm"><svg><use href="#spin"/></svg></span><label for="sz">Z</label><span class="num"><input id="sz" value="1100 cm"><svg><use href="#spin"/></svg></span><label for="rb">B</label><span class="num"><input id="rb" value="0 °"><svg><use href="#spin"/></svg></span>
            <i></i><select aria-label="坐标空间"><option>对象 (相对)</option></select><i></i><select aria-label="尺寸模式"><option>绝对尺寸</option></select><i></i><button class="pill">应用</button>
          </div>
        </section>
      </div>
    </div>
  </div>
  <footer class="status"><i class="grip b"></i><span>Total 00h 00m 14.766s Called 1 times Avg 00h 00m 14.766s</span><span class="msg">使用矩阵对象切换所选克隆对象</span></footer>
</main>

<aside class="right">
  <div class="objwrap">
  <section class="objects">
    <header class="phead"><i class="grip b"></i><span>文件</span><span>编辑</span><span>查看</span><span>对象</span><span>标签</span><span>书签</span><div class="acts"><svg><use href="#mag"/></svg><svg><use href="#home"/></svg><svg><use href="#eyes"/></svg><svg><use href="#plus"/></svg></div></header>
    <ul class="tree">
      <li><span class="nm"><svg><use href="#bulb"/></svg>灯光</span><svg class="fl"><use href="#tick"/></svg><span class="tg"></span></li>
      <li><span class="nm"><span class="xp"><svg><use href="#o-xp"/></svg><b>XP</b></span>Krakatoa X-Particles Source</span><svg class="fl"><use href="#tick"/></svg><span class="tg"></span></li>
      <li><span class="nm"><svg><use href="#o-sys"/></svg>System</span><svg class="fl"><use href="#tick"/></svg><span class="tg"></span></li>
      <li><span class="nm d1"><svg><use href="#o-grp"/></svg>Groups</span><svg class="fl"><use href="#tick"/></svg><span class="tg"></span></li>
      <li><span class="nm d1"><svg><use href="#o-emi"/></svg>Emitters</span><svg class="fl"><use href="#tick"/></svg><span class="tg"></span></li>
      <li><span class="nm d2"><svg><use href="#o-em1"/></svg>Emitter</span><svg class="fl"><use href="#tick"/></svg><span class="tg"></span></li>
      <li><span class="nm d1"><svg><use href="#o-gen"/></svg>Generators</span><svg class="fl"><use href="#tick"/></svg><span class="tg"></span></li>
      <li><span class="nm d1"><svg><use href="#o-mod"/></svg>Modifiers</span><svg class="fl"><use href="#tick"/></svg><span class="tg"></span></li>
      <li><span class="nm d1"><svg><use href="#o-que"/></svg>Questions</span><svg class="fl"><use href="#tick"/></svg><span class="tg"></span></li>
      <li><span class="nm d1"><svg><use href="#o-act"/></svg>Actions</span><svg class="fl"><use href="#tick"/></svg><span class="tg"></span></li>
      <li><span class="nm"><svg color="#7cc0f8"><use href="#cube"/></svg>立方体</span><svg class="fl"><use href="#tick"/></svg><span class="tg"><svg><use href="#t-tfd"/></svg><svg><use href="#t-dyn"/></svg></span></li>
      <li class="cur"><span class="nm"><svg><use href="#o-tfd"/></svg>TurbulenceFD Container</span><svg class="fl off"><use href="#tick"/></svg><span class="tg"></span></li>
      <li><span class="nm"><svg><use href="#o-null"/></svg>空白</span><svg class="fl"><use href="#flags"/></svg><span class="tg"></span></li>
      <li><span class="nm d1"><svg><use href="#cam"/></svg>摄像机</span><svg class="fl" viewBox="0 0 39 20"><use href="#flags" width="39" height="20"/><path d="M28 9V6h3M34 6h3v3M37 12v3h-3M31 15h-3v-3M32.500 8v5M30 10.500h5" fill="none" stroke="#1a1a1a" stroke-width="1.500"/></svg><span class="tg"></span></li>
      <li><span class="nm"><svg><use href="#o-pla"/></svg>dance1_skin PLA</span><svg class="fl off"><use href="#flags"/></svg><span class="tg"><svg><use href="#t-tfd"/></svg><svg><use href="#t-uv"/></svg></span></li>
      <li class="rest"><span class="nm"></span><span class="fl"></span><span class="tg"></span></li>
    </ul>
    <svg class="lines" width="40" height="300"><path d="M7.500 0v290.500h8M7.500 10.500h8M7.500 30.500h8M7.500 50.500h8M7.500 210.500h8M7.500 230.500h8M7.500 250.500h8M18.500 60v130.500M18.500 70.500h8M18.500 90.500h8M29.500 100v10.500h8M18.500 130.500h8M18.500 150.500h8M18.500 170.500h8M18.500 190.500h8M18.500 260v10.500h8"/><path class="bx" d="M3.500 46.500h8v8h-8zM14.500 86.500h8v8h-8zM3.500 246.500h8v8h-8z"/><path d="M5.500 50.500h4M16.500 90.500h4M5.500 250.500h4"/></svg>
  </section>
  <div class="vtabs"><button class="on">对象</button><button>场次</button><button>内容浏览器</button><button>构造</button></div>
  </div>

  <section class="attrs">
    <h2><i></i>属性</h2>
    <header class="phead"><i class="grip b"></i><span>模式</span><span>编辑</span><span>用户数据</span><div class="acts"><svg class="w36" viewBox="0 0 36 16"><path d="M1 8L18 1l17 7-17 7zM12 8l6-5M24 8l-6 5M14 4v8M22 4v8" fill="none" stroke="#5c5c5c" stroke-width="1.500"/></svg><svg viewBox="0 0 16 16"><path d="M8 0l6 15-6-3-6 3z" fill="#161616"/></svg><svg><use href="#mag"/></svg><svg><use href="#lock"/></svg><svg><use href="#target"/></svg><svg><use href="#plus"/></svg></div></header>
    <div class="oname"><svg><use href="#o-tfd"/></svg>TurbulenceFD Container [TurbulenceFD Container]</div>
    <div class="atabs"><button>基本</button><button>坐标</button><button class="on">Container</button><button>Simulation</button><button>Viewport Preview</button><button>Rendering</button></div>
    <div class="abody">
      <div class="ascroll">
        <h3>Container</h3>
        <h4>Resolution</h4>
        <div class="fields">
          <i></i><label for="vs">Voxel Size<span> . . . . . .</span></label><span class="num"><input id="vs" value="1.5 cm"><svg><use href="#spin"/></svg></span>
          <input type="radio" name="g1" aria-label="Grid Size 动画"><label for="gs">Grid Size<span>. . . . . . . .</span></label><span class="num"><input id="gs" value="405 cm"><svg><use href="#spin"/></svg></span><span class="num"><input aria-label="Y" value="260 cm"><svg><use href="#spin"/></svg></span><span class="num"><input aria-label="Z" value="1100 cm"><svg><use href="#spin"/></svg></span>
          <input type="radio" name="g2" aria-label="Grid Offset 动画"><label for="go">Grid Offset<span>. . . . . .</span></label><span class="num"><input id="go" value="0 cm"><svg><use href="#spin"/></svg></span><span class="num"><input aria-label="Y" value="0 cm"><svg><use href="#spin"/></svg></span><span class="num"><input aria-label="Z" value="0 cm"><svg><use href="#spin"/></svg></span>
        </div>
        <div class="mem"><span>Max Memory Usage</span><span>275x179x739, 36.4MV - CPU 3.6GB GPU</span></div>
        <h4>Cache</h4>
        <div class="cache">
          <label class="k" for="sc">Simulation Caches</label><input id="sc" class="txt" value="G:/TFD\TurbulenceFD Cac"><button class="pill">Browse...</button>
        </div>
        <div class="cache alt">
          <label for="ab">Alt. Base Path</label><input id="ab" class="txt" value=""><button class="pill">Browse...</button>
        </div>
        <div class="clist"><div>Cache 001&ensp;110.16GB</div></div>
      </div>
      <div class="sb vert"><svg viewBox="0 0 8 8"><path d="M4 0l3 8-3-2-3 2z"/></svg><i style="height:126px"></i><svg class="end" viewBox="0 0 8 8"><path d="M4 8l3-8-3 2-3-2z"/></svg></div>
    </div>
    <div class="sb horz"><svg viewBox="0 0 8 8"><path d="M0 4l8-3-2 3 2 3z"/></svg><i style="width:86%"></i><svg class="end" viewBox="0 0 8 8"><path d="M8 4L0 1l2 3-2 3z"/></svg></div>
  </section>
</aside>
</div>
</div>

<section class="viewer" aria-label="图片查看器">
  <header class="vtitle"><svg class="logo"><use href="#c4d"/></svg><h2>图片查看器</h2><div class="winbtns dark"><button aria-label="最大化"><svg viewBox="0 0 12 12"><path d="M1.500 1.500h9v9h-9z"/></svg></button><button aria-label="关闭"><svg viewBox="0 0 12 12"><path d="M1 1l10 10M11 1L1 11"/></svg></button></div></header>
  <nav class="vmenu"><i class="grip b"></i><span>文件</span><span>编辑</span><span>查看</span><span>比较</span><span>动画</span><div class="acts"><svg><use href="#dock"/></svg><svg><use href="#plus"/></svg><svg><use href="#pan"/></svg><svg><use href="#updn"/></svg></div></nav>
  <div class="vtools"><i class="grip v"></i>
    <div class="grp"><button><svg><use href="#v-open"/></svg></button><button><svg><use href="#v-save"/></svg></button></div>
    <div class="grp"><button class="gh"><svg><use href="#v-stop"/></svg></button></div>
    <div class="grp"><button><svg><use href="#v-add"/></svg></button><button><svg><use href="#v-ball"/></svg></button></div>
    <div class="grp"><button><svg><use href="#v-del"/></svg></button><button class="on more"><svg><use href="#v-sets"/></svg></button></div>
    <div class="grp"><button><svg><use href="#v-f1"/></svg></button><button><svg><use href="#v-f2"/></svg></button><button class="on"><svg><use href="#v-rgb"/></svg></button></div>
    <div class="grp"><button class="ab"><svg><use href="#v-page"/></svg><b>A B</b></button><button class="on gh ab"><svg><use href="#v-pg"/></svg><b>A B</b></button><button class="gh ab gtext"><svg viewBox="0 0 28 28"><path d="M12 15h13v10H12zM14 20c3-4 6-4 9 0-3 3-6 3-9 0z"/></svg><b>AB</b></button></div>
    <div class="grp near"><button class="ab big"><svg><use href="#v-arr"/></svg><b>A</b></button><button class="ab big"><svg><use href="#v-arr"/></svg><b>B</b></button></div>
    <div class="grp near"><button class="gh ab"><svg><use href="#v-pg"/></svg><b>A D</b></button><button class="gh ab"><svg><use href="#v-pg"/></svg><b>A =</b></button><button class="gh ab"><svg><use href="#v-pg"/></svg><b>A 1</b></button></div>
  </div>
  <div class="vbody">
    <div class="canvas">
      <div class="cv"><div class="img"></div></div>
      <div class="trk tv"></div><div class="trk th"></div>
    </div>
    <div class="side">
      <section class="nav">
        <div class="tabs t40"><button class="on">导航器</button><button>柱状图</button></div>
        <div class="thumb"></div>
        <div class="zoom"><span class="num"><input aria-label="缩放" value="51.2 %"><svg><use href="#spin"/></svg></span><div class="slider"><i></i></div><button class="round" aria-label="菜单"><svg><use href="#play"/></svg></button></div>
      </section>
      <section class="hist">
        <div class="tabs t30"><button class="on">历史</button><button>信息</button><button>层</button><button>滤镜</button><button>立体</button></div>
        <h3>历史</h3>
        <div class="hbody">
          <div class="htbl"><table>
            <thead><tr><th>名称</th><th>R</th><th>渲染时间</th><th>F</th><th>分辨率</th></tr></thead>
            <tbody>
            <tr class="cut"><td><div><i></i>230</div></td><td><div><b></b></div></td><td><div>00:00:27</div></td><td><div>230</div></td><td><div>1280x</div></td></tr>
            <tr><td><div><i></i>231</div></td><td><b></b></td><td>00:00:28</td><td>231</td><td>1280x</td></tr>
            <tr><td><div><i></i>232</div></td><td><b></b></td><td>00:00:26</td><td>232</td><td>1280x</td></tr>
            <tr><td><div><i></i>233</div></td><td><b></b></td><td>00:00:25</td><td>233</td><td>1280x</td></tr>
            <tr><td><div><i></i>234</div></td><td><b></b></td><td>00:00:30</td><td>234</td><td>1280x</td></tr>
            <tr><td><div><i></i>235</div></td><td><b></b></td><td>00:00:24</td><td>235</td><td>1280x</td></tr>
            <tr><td><div><i></i>236</div></td><td><b></b></td><td>00:00:25</td><td>236</td><td>1280x</td></tr>
            <tr><td><div><i></i>237</div></td><td><b></b></td><td>00:00:26</td><td>237</td><td>1280x</td></tr>
            <tr><td><div><i></i>238</div></td><td><b></b></td><td>00:00:24</td><td>238</td><td>1280x</td></tr>
            <tr><td><div><i></i>239</div></td><td><b></b></td><td>00:00:24</td><td>239</td><td>1280x</td></tr>
            <tr><td><div><i></i>240</div></td><td><b></b></td><td>00:00:24</td><td>240</td><td>1280x</td></tr>
            <tr><td><div><i></i>241</div></td><td><b></b></td><td>00:00:25</td><td>241</td><td>1280x</td></tr>
            <tr><td><div><i></i>242</div></td><td><b></b></td><td>00:00:23</td><td>242</td><td>1280x</td></tr>
            <tr><td><div><i></i>243</div></td><td><b></b></td><td>00:00:24</td><td>243</td><td>1280x</td></tr>
            <tr><td><div><i></i>244</div></td><td><b></b></td><td>00:00:23</td><td>244</td><td>1280x</td></tr>
            <tr class="sel"><td><div><i></i>245</div></td><td><b></b></td><td>00:00:23</td><td>245</td><td>1280x</td></tr>
            </tbody></table></div>
          <div class="sb vert low"><svg viewBox="0 0 8 8"><path d="M4 0l3 8-3-2-3 2z"/></svg><i style="height:20px"></i><svg class="end" viewBox="0 0 8 8"><path d="M4 8l3-8-3 2-3-2z"/></svg></div>
        </div>
        <div class="sb horz"><svg viewBox="0 0 8 8"><path d="M0 4l8-3-2 3 2 3z"/></svg><i style="width:82%"></i><svg class="end" viewBox="0 0 8 8"><path d="M8 4L0 1l2 3-2 3z"/></svg></div>
      </section>
    </div>
  </div>
  <div class="time">
    <span class="num"><input aria-label="帧率" value="25"><svg><use href="#spin"/></svg></span>
    <div class="ruler"><div class="green"></div><div class="ticks"></div><div class="secs"></div><div class="nums"><span>0</span><span>10</span><span>20</span><span>30</span><span>40</span><span>50</span><span>60</span><span>70</span><span>80</span><span>90</span><span>100</span><span>110</span><span>120</span><span>130</span><span>140</span><span>150</span><span>160</span><span>170</span><span>180</span><span>190</span><span>200</span><span>210</span><span>220</span><span>230</span><span>240</span></div><div class="head"></div></div>
    <span class="num"><input aria-label="当前帧" value="245 F"><svg><use href="#spin"/></svg></span>
  </div>
  <div class="time range">
    <span class="num"><input aria-label="起始帧" value="0 F"><svg><use href="#spin"/></svg></span>
    <div class="bar"><svg viewBox="0 0 8 8"><path d="M0 4l8-3-2 3 2 3z"/></svg><span>0 F</span><span class="r">245 F</span><svg viewBox="0 0 8 8"><path d="M8 4L0 1l2 3-2 3z"/></svg></div>
    <span class="num"><input aria-label="结束帧" value="245 F"><svg><use href="#spin"/></svg></span>
    <div class="play">
      <button aria-label="起点"><svg viewBox="0 0 16 12"><path d="M1 1h2v10H1zM9 1v10L3 6zM16 1L9 6l7 5-3-5z"/></svg></button>
      <button aria-label="上一帧"><svg viewBox="0 0 16 12"><path d="M10 1v9L3 6z"/><path d="M14 0q-4 6 0 12" fill="none" stroke="#161616" stroke-width="1.500"/></svg></button>
      <button class="gr" aria-label="倒放"><svg viewBox="0 0 16 12"><path d="M14 0L2 6l12 6-3-6z"/></svg></button>
      <button class="gr" aria-label="播放"><svg viewBox="0 0 16 12"><path d="M2 0l12 6-12 6 3-6z"/></svg></button>
      <button aria-label="下一帧"><svg viewBox="0 0 16 12"><path d="M6 1v9l8-4z"/><path d="M2 0q4 6 0 12" fill="none" stroke="#161616" stroke-width="1.500"/></svg></button>
      <button aria-label="终点"><svg viewBox="0 0 16 12"><path d="M13 1h2v10h-2zM7 1v10l6-5zM0 1l7 5-7 5 3-5z"/></svg></button>
      <button class="gr" aria-label="内存"><svg viewBox="0 0 16 16"><path d="M4 1h8v14H4z"/><path d="M2.500 1v14M13.500 1v14" stroke="#58e89a" stroke-width="1.500" stroke-dasharray="1 1"/></svg></button>
      <button class="dim" aria-label="声音"><svg viewBox="0 0 16 16"><path d="M2 14l5-5M7 9q-4-5 1-8l6 7q-4 4-7 1M9 3q5 0 5 5" fill="none" stroke="#5c5c5c" stroke-width="1.500"/></svg></button>
      <button class="round" aria-label="菜单"><svg><use href="#play"/></svg></button>
    </div>
  </div>
  <footer class="vstat"><span class="num"><input aria-label="缩放比例" value="51.2 %"><svg><use href="#spin"/></svg></span><button class="round" aria-label="菜单"><svg><use href="#play"/></svg></button><span class="pr">01:25:33 246/246 (245 F)</span><span class="inf">尺寸: 1280x720, RGB (32 位), 3.22 KB,&ensp;( F 246 of 246 )</span></footer>
</section>

<div class="badge"><svg viewBox="0 0 50 50"><circle cx="25" cy="25" r="23.500" fill="#fff" stroke="#2b8af5" stroke-width="2.600"/><circle cx="25" cy="25" r="21" fill="#fff" stroke="#333" stroke-width="1.200"/><path d="M21 22q4-3 8 0l-1 7-3 4-3-4z" fill="#0c0c0c"/><path d="M22 21q-7 0-8-8M17 18l-3-1M18 19l-1-7M28 21q7 0 8-8M33 18l3-1M32 19l1-7M22 22l-5 0M28 22l5 0" fill="none" stroke="#0c0c0c" stroke-width="1.600"/></svg><b>竹鹿客</b></div>
<div class="redbox"></div>
<svg class="arrow" viewBox="0 0 72 68"><path d="M70 1L9 58" stroke="#f00" stroke-width="2.600"/><path d="M1 65L7 52l8 8z" fill="#f00"/></svg>
</body>
</html>
```
FILE: styles.css
```css
*{box-sizing:border-box}
body{margin:0;background:#474747;color:#b2b2b2;font:11px/16px "Noto Sans","Noto Sans CJK SC",sans-serif;overflow:hidden}
h1,h2,h3,h4,ul{margin:0;padding:0;font-size:inherit;font-weight:normal}
button,input,select{font:inherit;color:inherit;margin:0;padding:0;border:0;background:none;min-width:0}
svg{display:block}
.defs{position:absolute;width:0;height:0}
.app{height:100vh;display:flex;flex-direction:column;border-top:1px solid #a9a9a9;border-left:1px solid #6d6d6d;border-bottom:1px solid #aaa;border-right:1px solid #5b5b5b}

.titlebar{display:flex;align-items:center;height:30px;flex:none;padding:0 2px 0 8px;background:#fff;color:#929292;font-size:12px}
.logo{width:16px;height:16px;margin-right:5px}
.winbtns{margin-left:auto;display:flex}
.winbtns button{width:45px;display:flex;justify-content:center}
.winbtns svg{width:12px;height:12px;fill:none;stroke:#888;stroke-width:1}
.winbtns.dark svg{stroke:#111}
.menubar{display:flex;align-items:center;gap:14px;height:23px;flex:none;padding:0 2px 0 8px}
.layout{margin-left:auto;display:flex;align-items:center;gap:4px}
.g16{width:14px;height:16px;margin-left:-8px}
select{appearance:none;height:18px;padding:0 7px;border-radius:4px;border:1px solid #3a3a3a;border-bottom-color:#2c2c2c;color:#ccc;background:linear-gradient(45deg,transparent 50%,#ccc 50%) right 9px top 7px/4px 4px no-repeat,linear-gradient(-45deg,transparent 50%,#ccc 50%) right 5px top 7px/4px 4px no-repeat,linear-gradient(#707070,#585858)}
.layout select{width:128px}

.columns{flex:1;min-height:0;display:flex}
.left{flex:1;min-width:0;display:flex;flex-direction:column}
.right{width:356px;flex:none;display:flex;flex-direction:column;gap:4px;padding-top:5px}

.grip{display:block;flex:none;background:repeating-conic-gradient(#7c7c7c 0 25%,#333 0 50%) 0 0/4px 4px}
.grip.v{width:6px;height:27px}
.grip.h{width:27px;height:6px;margin:0 4px 2px}
.grip.b{width:12px;height:12px}
.grp{display:flex;flex:none;gap:1px;background:#3c3c3c;border-radius:4px;box-shadow:0 0 0 1px #2b2b2b;overflow:hidden}
.grp.col{flex-direction:column}
.grp button,.film{position:relative;display:block;width:35px;height:35px;background:linear-gradient(#6c6c6c,#626262)}
.grp button svg{width:35px;height:35px}
.grp button.on{background:#8da6d0}
.more::after{content:"";position:absolute;right:1px;bottom:1px;border:2px solid #161616;border-left-color:transparent;border-top-color:transparent}
.gh svg{fill:none;stroke:#868686;stroke-width:1.200;filter:drop-shadow(-1px -1px 0 #4e4e4e)}
.faint svg{stroke:#757575;filter:drop-shadow(-1px -1px 0 #575757)}
.axis b{position:absolute;inset:0;text-align:center;font:900 17px/35px "Liberation Sans",sans-serif;color:#151515;-webkit-text-stroke:1px #151515}
.psr b{display:block;font:900 13px/15px "Liberation Sans",sans-serif;color:#fdb52a;text-shadow:0 0 1px #000}
.psr b+b{font-size:17px;line-height:16px;color:#ddd;padding-left:14px}
.trow{display:flex;align-items:center;gap:3px;height:35px;margin:4px 0 0}
.trow .grp{margin-right:8px}
.trow .grp:has(+.near){margin-right:0}
.trow.second{padding-left:2px}
.trow.second .grp{margin-right:0}
.trow:first-child{margin-top:6px}

.work{flex:1;min-height:0;display:flex;padding-top:5px}
.modes{width:38px;flex:none;display:flex;flex-direction:column;gap:2px;padding-left:1px}
.modes .far{margin-top:9px}
.modes .grp,.toolcol .grp{width:35px}
.brand{margin-top:auto;margin-bottom:6px;writing-mode:vertical-rl;transform:rotate(180deg);color:#8f8f8f;line-height:18px;display:flex;flex-direction:column;width:36px;font-size:14px}
.brand b{font:italic 900 16px/17px "Liberation Sans",sans-serif;-webkit-text-stroke:1px #8f8f8f}
.center{flex:1;min-width:0;display:flex;flex-direction:column;padding-right:2px}
.stage{flex:1;min-height:0;display:flex;overflow:hidden}
.toolcol{display:flex;flex-direction:column;gap:3px;padding-left:2px;flex:none}
.toolcol .grip{margin-bottom:-1px}
.toolcol.wide .grp{width:42px}
.toolcol.wide button{width:42px}
.viewport{flex:1}
.tl{display:flex;gap:3px;align-items:center;height:22px;margin-top:4px;padding-left:1px}
.tl.two{margin-top:8px}
.tl .grip{height:18px}
.tlbar{flex:1;height:21px;padding:1px 4px;background:#333;border:1px solid #222;border-radius:3px 0 0 3px;margin-right:2px}
.one .tlbar{line-height:10px;padding-left:2px}
.film{width:27px;height:27px;background:#8da6d0;border-radius:3px}
.film svg{width:27px;height:27px}
.bottom{display:flex;gap:3px;margin-top:4px;height:122px}
.mats{flex:1;border:1px solid #333;border-left-color:#666;border-top-color:#666}
.mats header{display:flex;gap:9px;align-items:center;height:24px;padding-left:6px;border-bottom:1px solid #333}
.coords{width:301px;border:1px solid #333;border-top-color:#666;border-left-color:#666;padding:27px 5px 0 4px}
.cgrid{display:grid;grid-template-columns:8px 1fr 8px 1fr 8px 1fr;gap:3px 4px;align-items:center}
.cgrid select,.cgrid .pill{margin-top:2px;width:100%}
.pill{height:18px;border-radius:9px;border:1px solid #303030;background:linear-gradient(#707070,#5c5c5c);color:#ccc}
.status{height:21px;flex:none;display:flex;align-items:center;gap:9px;padding-left:5px;border-top:1px solid #666;margin-top:1px}
.msg{border-left:1px solid #2e2e2e;padding-left:4px}

.num{display:flex;align-items:center;height:20px;padding:0 2px 0 4px;background:#323232;border:1px solid;border-color:#232323 #5c5c5c #5c5c5c #232323;border-radius:3px}
.num input{flex:1;width:20px}
.num svg{width:6px;height:12px;flex:none}

.objwrap{flex:1;min-height:0;display:flex;gap:2px}
.objects{position:relative;flex:1;display:flex;flex-direction:column;border:1px solid #666;border-right-color:#333;margin-left:1px}
.phead{display:flex;align-items:center;gap:14px;height:25px;flex:none;padding-left:5px;border-bottom:1px solid #2f2f2f}
.phead .grip+span{margin-left:-6px}
.acts{display:flex;gap:3px;margin-left:auto}
.acts svg{width:16px;height:16px}
.acts .w36{width:36px}
.tree{list-style:none;flex:1;display:flex;flex-direction:column;border-top:1px solid #666;margin-right:2px;border-right:1px solid #666}
.tree li{display:grid;grid-template-columns:1fr 39px 102px;height:20px;background:#474747;flex:none}
.tree li:nth-child(odd){background:#505050}
.tree li.rest{flex:1;background:none;height:auto}
.nm{display:flex;align-items:center;gap:4px;padding-left:15px;white-space:nowrap}
.nm svg{width:17px;height:17px;flex:none}
.nm.d1{padding-left:26px}
.nm.d2{padding-left:37px}
.cur .nm{color:#fbb82e}
.xp{position:relative}
.xp b{position:absolute;inset:0;text-align:center;font:bold 10px/18px "Liberation Serif",serif;color:#000}
.fl{width:39px;height:20px;border-left:1px solid #333;color:#777}
.fl.off{color:#e35555}
.tg{display:flex;align-items:center;gap:4px;border-left:1px solid #666;padding-left:1px}
.tg svg{width:17px;height:15px}
.tree .rest .fl{height:auto}
.lines{position:absolute;left:0;top:26px;fill:none;stroke:#a0a0a0}
.lines .bx{fill:#4b4b4b}
.vtabs{width:22px;display:flex;flex-direction:column;gap:2px}
.vtabs button{writing-mode:vertical-rl;text-orientation:sideways;text-align:left;width:22px;padding:6px 0;line-height:22px;background:#353535;border-radius:0 3px 3px 0;color:#777}
.vtabs .on{background:#696969;color:#fba92a}

.attrs{flex:1;min-height:0;display:flex;flex-direction:column;border:1px solid #666;border-right:0;margin-left:1px}
.attrs h2{display:flex;align-items:center;height:20px;flex:none;gap:11px;padding-left:4px;background:#303030}
.attrs h2 i{width:9px;height:11px;background:linear-gradient(135deg,#aaa,#666)}
.attrs .acts{margin-right:4px;gap:3px}
.oname{display:flex;align-items:center;gap:5px;height:27px;flex:none;padding-left:4px;border-top:1px solid #666;white-space:nowrap}
.oname svg{width:19px;height:19px}
.atabs{display:grid;grid-template-columns:repeat(3,98px);gap:1px;background:#2b2b2b;border:1px solid #2b2b2b;border-radius:3px;align-self:flex-start;margin:-1px 0 0 2px;overflow:hidden;flex:none}
.atabs button{height:19px;background:#6a6a6a;color:#c4c4c4;white-space:nowrap}
.atabs .on,.tabs .on{background:#8da6d0;color:#000}
.abody{flex:1;min-height:0;display:flex;gap:3px;margin:5px 6px 0 2px}
.ascroll{flex:1;min-width:0;overflow:hidden;background:#505050;white-space:nowrap;display:flex;flex-direction:column}
h3{height:18px;line-height:18px;background:#323232;padding-left:2px}
.ascroll h3{font-weight:bold;flex:none}
h4{display:flex;align-items:center;gap:2px;height:18px;flex:none;background:#6a6a6a;margin-top:4px;padding-left:11px;box-shadow:0 -4px #474747}
h4::before{content:"";border:4px solid transparent;border-top-color:#eee;border-bottom-width:0}
.fields{display:grid;grid-template-columns:14px 91px 66px 66px 66px;gap:3px 6px;padding:4px 0 0 10px;align-items:center}
.fields label{grid-column:2;margin-left:-2px}
.fields label+.num{grid-column:3}
.fields>i,.fields>input{grid-column:1}
.fields label span{color:#999}
.fields [type=radio]{appearance:none;width:13px;height:13px;border-radius:50%;background:#8a8a8a;border:2px solid #2a2a2a;box-shadow:0 0 0 1px #8a8a8a}
.mem{display:flex;gap:2px;height:26px;flex:none;align-items:center;padding-left:20px}
.cache{display:flex;align-items:center;height:28px;flex:none}
.cache .k{width:125px;flex:none;text-align:right;margin-right:4px;align-self:flex-start;padding-top:5px}
.txt{width:146px;flex:none;height:22px;padding:0 4px;background:#323232;border:1px solid;border-color:#232323 #5c5c5c #5c5c5c #232323;border-radius:3px}
.cache .pill{width:76px;margin-left:7px;height:20px;flex:none}
.alt{padding-left:128px}
.alt .txt{width:69px}
.alt label{width:78px;flex:none}
.clist{flex:1;margin:3px 0 0 128px;border:1px solid #333;border-right:0;border-bottom:0}
.clist div{height:20px;line-height:20px;padding-left:4px;background:#6a6a6a}
.sb{display:flex;background:#323232;border-radius:5px;box-shadow:inset 0 0 0 1px #2b2b2b;flex:none}
.sb svg{width:8px;height:8px;fill:#aaa;flex:none}
.sb i{background:#6c6c6c;border-radius:4px;border:1px solid #7c7c7c}
.sb.vert{flex-direction:column;width:10px;padding:1px}
.sb.vert .end{margin:auto 0 0}
.sb.low i{margin-top:auto}
.sb.low .end{margin-top:0}
.sb.horz{height:11px;padding:1px;align-items:stretch}
.sb.horz .end{margin:0 0 0 auto}
.attrs .sb.horz{margin:3px 20px 2px 2px}

.viewer{position:absolute;left:74px;right:400px;top:123px;bottom:110px;display:flex;flex-direction:column;border:1px solid #1f83d6;background:#474747;box-shadow:0 2px 10px rgba(0,0,0,.35)}
.vtitle{display:flex;align-items:center;height:30px;flex:none;padding:0 2px 0 8px;background:#fff;color:#000;font-size:12px}
.vmenu{display:flex;align-items:center;gap:14px;height:24px;flex:none;padding:0 0 0 6px;background:#696969;border-bottom:1px solid #2f2f2f}
.vmenu .grip+span{margin-left:-5px}
.vmenu .acts{gap:2px}
.vtools{display:flex;align-items:center;height:30px;flex:none;border-top:1px solid #666;border-bottom:1px solid #2f2f2f}
.vtools .grip{margin-right:2px;height:22px}
.vtools .grp{margin-right:11px}
.vtools .grp:has(+.near){margin-right:3px}
.vtools .grp button,.vtools .grp svg{width:27px;height:27px}
.ab b{position:absolute;inset:0;text-align:center;font:bold 9px/31px "Liberation Sans",sans-serif;color:#e4582c}
.ab.gh b{color:#8c8c8c;text-shadow:-1px -1px #444}
.ab.gtext b{font-size:13px;line-height:16px}
.ab.on b{color:#b4c6e6}
.ab.big b{font-size:14px;line-height:19px;text-align:right;padding-right:4px;-webkit-text-stroke:1px #e4582c}
.vbody{flex:1;min-height:0;display:flex;border-top:1px solid #666}
.canvas{flex:1;min-width:0;display:grid;grid-template-columns:1fr 10px;grid-template-rows:1fr 10px;gap:5px 0;padding:1px 6px 6px 2px}
.cv{display:flex;align-items:center;justify-content:center}
.img{width:76.7%;aspect-ratio:656/369;background:#000;margin:5px 4px 0 0}
.trk{background:#3f3f3f;border-radius:5px;border-right:1px solid #505050;border-bottom:1px solid #505050}
.trk.th{margin-right:3px}
.side{width:289px;flex:none;display:flex;flex-direction:column;gap:4px;margin-right:1px}
.nav,.hist{border:1px solid #333;border-left-color:#666;border-top-color:#666}
.nav{height:159px;padding:1px 3px 3px 1px;display:flex;flex-direction:column}
.tabs{display:flex;gap:1px;align-self:flex-start;background:#2b2b2b;border:1px solid #2b2b2b;border-radius:3px;overflow:hidden;flex:none}
.tabs button{height:18px;background:#696969;color:#c4c4c4;line-height:18px}
.t40 button{width:40px}
.t30 button{width:29px}
.thumb{width:173px;height:97px;background:#000;border:1px solid #b4b4b4;margin:9px 0 0 57px}
.zoom{display:flex;align-items:center;margin:5px 1px 0 5px}
.zoom .num{width:69px}
.slider{flex:1;height:16px;background:linear-gradient(#a8741c,#a8741c) 91px 12px/1px 4px no-repeat #323232;border-radius:2px;border-bottom:1px solid #5c5c5c;margin-right:6px}
.slider i{display:block;width:35px;height:15px;background:#828282;border-right:3px solid #f2a71d}
.round{display:flex;width:20px;height:20px;border-radius:10px;background:linear-gradient(#7c7c7c,#606060);border:1px solid #303030;align-items:center;justify-content:center;flex:none}
.round svg{width:8px;height:8px}
.hist{flex:1;min-height:0;display:flex;flex-direction:column;padding:3px 8px 8px 7px}
.hist .tabs{margin-left:-4px}
.hist h3{margin:9px 0 5px;flex:none}
.hbody{flex:1;min-height:0;display:flex;gap:2px;padding-right:3px}
.htbl{flex:1;min-width:0;overflow:hidden;border-right:1px solid #666}
table{table-layout:fixed;width:100%;border-collapse:separate;border-spacing:0}
th{height:20px;padding:0 0 0 3px;text-align:left;font-weight:normal;border:1px solid #666;border-right-color:#2f2f2f;border-bottom-color:#2f2f2f;white-space:nowrap;overflow:hidden}
th:nth-child(2){width:15px}th:nth-child(3){width:52px}th:nth-child(4){width:28px}th:nth-child(5){width:33px}
td{height:20px;padding:0;white-space:nowrap;overflow:hidden;line-height:20px}
td:nth-child(3){padding-left:4px}td:nth-child(4){padding-left:7px}td:nth-child(5){padding-left:7px}
td:first-child div{display:flex;align-items:center;height:20px;margin-left:29px;gap:3px;background:linear-gradient(#8a8a8a,#8a8a8a) 0 0/1px 100% no-repeat,linear-gradient(#8a8a8a,#8a8a8a) 0 10px/8px 1px no-repeat}
td i{width:18px;height:18px;margin-left:8px;background:#000}
td b{display:block;width:10px;height:10px;margin-left:4px;border-radius:50%;background:#4df29a}
tr:nth-child(even) td{background:#505050}
.cut td,.cut td div{height:8px}
.cut td div{display:flex;align-items:flex-end;overflow:hidden;line-height:20px}
.cut td:first-child div{align-items:flex-end}
.cut td b{margin-bottom:5px;flex:none}
tr.sel td{background:#6a6a6a;color:#fba92a}
.sel td:first-child div{background-size:1px 10px,8px 1px}
.hist .sb.horz{margin:3px 16px 0 1px}

.time{display:flex;align-items:center;gap:5px;height:23px;flex:none;margin:6px 3px 0 3px}
.time>.num{width:66px;flex:none;height:21px}
.ruler{flex:1;display:grid;height:22px;background:#333;border:1px solid #262626;border-radius:3px;overflow:hidden;margin-left:1px}
.ruler>div{grid-area:1/1}
.green{height:5px;background:#479467;align-self:end;margin:0 8px 1px 6px}
.ticks{height:2px;align-self:end;margin:0 6px 0 5px;background:linear-gradient(90deg,#ccc 1px,transparent 1px) 0 0/4px 1px repeat-x}
.secs{margin:0 -16px 1px 5px;background:linear-gradient(90deg,#666 1px,transparent 1px) 0 0/10% 100%}
.nums{display:grid;grid-template-columns:repeat(25,1fr);margin:-2px 5px 0 -16px;text-align:center}
.head{justify-self:end;width:9px;height:17px;margin-right:1px;background:#5be396}
.range{margin-top:5px;padding-bottom:1px}
.range .bar{flex:1;height:17px;display:flex;align-items:center;gap:3px;padding:0 6px;background:linear-gradient(#858585,#646464);border-radius:4px;border:1px solid #3a3a3a;color:#333;margin-left:1px}
.bar svg{width:8px;height:8px;fill:#eee}
.bar .r{margin-left:auto}
.play{display:flex;width:211px;justify-content:space-between;align-items:center}
.play button{width:20px;display:flex;justify-content:center}
.play svg{width:16px;height:14px;fill:#161616}
.play .gr svg{fill:#4df29a}
.play .round svg{width:8px}
.vstat{display:flex;align-items:center;height:27px;flex:none;margin-top:2px;padding-left:3px;border-top:1px solid #666}
.vstat .num{width:69px;margin-right:5px}
.pr{margin-left:10px}
.inf{margin-left:11px;padding-left:4px;border-left:1px solid #222}

.badge{position:absolute;top:106px;right:490px;width:50px;height:50px}
.badge svg{width:50px;height:50px}
.badge b{position:absolute;left:0;right:0;top:33px;text-align:center;font-size:6px;line-height:8px;color:#000}
.redbox{position:absolute;left:154px;bottom:110px;width:145px;height:32px;border:2px solid #f00}
.arrow{position:absolute;left:267px;bottom:172px;width:72px;height:68px}
```
